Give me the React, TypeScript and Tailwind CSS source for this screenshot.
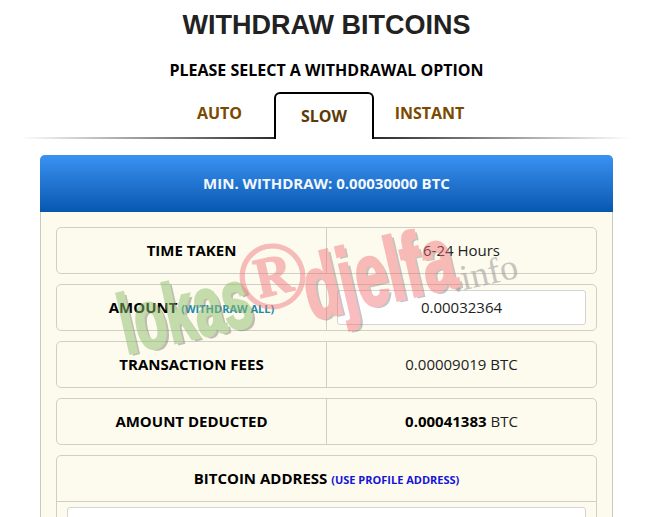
import React from "react";

const Row = ({ label, children }: { label: React.ReactNode; children: React.ReactNode }) => (
  <div className="flex h-[47px] rounded-[5px] border border-[#cfcfc8]">
    <div className="flex w-[270px] items-center justify-center border-r border-[#cfcfc8] text-[15px] font-bold text-black">
      {label}
    </div>
    <div className="flex flex-1 items-center justify-center text-[15px] text-[#222]">{children}</div>
  </div>
);

export default function App() {
  return (
    <div className="relative h-[517px] w-[649px] overflow-hidden bg-white font-['Open_Sans',sans-serif]">
      <h1 className="pt-[6px] pl-[4px] text-center font-['Liberation_Sans',sans-serif] text-[27px] leading-[38px] font-bold text-[#222]">
        WITHDRAW BITCOINS
      </h1>
      <p className="mt-[15px] pl-[4px] text-center text-[16px] leading-[22px] font-bold text-black">
        PLEASE SELECT A WITHDRAWAL OPTION
      </p>
      <div className="relative mt-[11px] flex h-[47px] justify-center">
        <div className="absolute bottom-0 left-[20px] h-[2px] w-[610px] bg-gradient-to-r from-transparent via-black to-transparent" />
        <div className="flex w-[110px] items-start justify-center pt-[10px] text-[16px] leading-[22px] font-bold text-[#7a4a00]">
          AUTO
        </div>
        <div className="relative z-10 ml-[-1px] flex w-[100px] items-start justify-center rounded-t-[6px] border-2 border-b-0 border-black bg-white pt-[11px] pl-[1px] text-[16px] leading-[22px] font-bold text-[#5c3a08]">
          SLOW
        </div>
        <div className="flex w-[111px] items-start justify-center pt-[10px] pl-[1px] text-[16px] leading-[22px] font-bold text-[#7a4a00]">
          INSTANT
        </div>
      </div>

      <div className="ml-[40px] mt-[16px] h-[400px] w-[573px] rounded-t-[5px] border border-t-0 border-[#c9c9c2] bg-[#fdfbee]">
        <div className="-mx-px flex h-[57px] items-center justify-center rounded-t-[5px] bg-gradient-to-b from-[#3a92f2] to-[#0458b0] text-[15px] font-bold text-[#f4f8fc]">
          MIN. WITHDRAW: 0.00030000 BTC
        </div>
        <div className="flex flex-col gap-[10px] px-[15px] pt-[15px]">
          <Row label="TIME TAKEN">6-24 Hours</Row>
          <Row
            label={
              <span>
                AMOUNT <span className="text-[11px] font-bold text-[#1f8aa8]">(WITHDRAW ALL)</span>
              </span>
            }
          >
            <div className="mx-[10px] flex h-[35px] w-full items-center justify-center rounded-[3px] border border-[#d4d4d4] bg-white">
              0.00032364
            </div>
          </Row>
          <Row label="TRANSACTION FEES">0.00009019 BTC</Row>
          <Row label="AMOUNT DEDUCTED">
            <span>
              <b className="font-bold text-black">0.00041383</b> BTC
            </span>
          </Row>
          <div className="rounded-[5px] border border-[#cfcfc8]">
            <div className="flex h-[46px] items-center justify-center border-b border-[#cfcfc8] text-[15px] font-bold text-black">
              <span>
                BITCOIN ADDRESS{" "}
                <span className="text-[11px] font-bold text-[#1414d8]">(USE PROFILE ADDRESS)</span>
              </span>
            </div>
            <div className="px-[10px] py-[5px]">
              <div className="h-[40px] rounded-[3px] border border-[#d4d4d4] bg-white" />
            </div>
          </div>
        </div>
      </div>

      {/* Watermark */}
      <div className="pointer-events-none absolute top-0 left-0 h-full w-full font-['Liberation_Sans',sans-serif] font-bold">
        <span className="absolute top-[281px] left-[120px] origin-left -rotate-[13deg] scale-x-[0.62] text-[84px] leading-[90px] text-[#8dbf6d] opacity-50 [-webkit-text-stroke:3px_#8dbf6d] [text-shadow:4px_3px_0_#808070]">
          lokas
        </span>
        <span className="absolute top-[233px] left-[236px] -rotate-[13deg] font-['Liberation_Serif',serif] text-[96px] leading-[86px] text-[#f07c84] opacity-50 [-webkit-text-stroke:1px_#f07c84]">
          ®
        </span>
        <span className="absolute top-[245px] left-[304px] origin-left -rotate-[13deg] scale-x-[0.65] text-[90px] leading-[90px] text-[#f36c73] opacity-45 [-webkit-text-stroke:3px_#f36c73] [text-shadow:4px_3px_0_#808080]">
          djelfa
        </span>
        <span className="absolute top-[255px] left-[451px] -rotate-[13deg] font-['Liberation_Serif',serif] text-[36px] leading-[36px] font-normal text-[#999] opacity-55">
          .info
        </span>
      </div>
    </div>
  );
}
